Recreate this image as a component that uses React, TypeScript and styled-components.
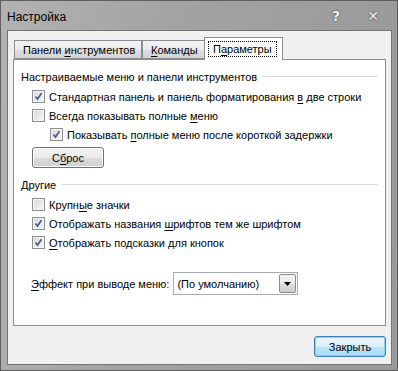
import React from "react";
import styled, { createGlobalStyle } from "styled-components";

const Global = createGlobalStyle`
  html, body { margin: 0; padding: 0; background: #8a8a8a; }
  body { font-family: "Liberation Sans", Arial, sans-serif; font-size: 11px; color: #000; }
`;

const Window = styled.div`
  width: 398px;
  height: 371px;
  box-sizing: border-box;
  border: 1px solid #5e5e5e;
  background: linear-gradient(100deg, #b2b2b2 0%, #a2a2a2 40%, #999999 100%);
  display: flex;
  flex-direction: column;
`;

const TitleBar = styled.div`
  height: 29px;
  display: flex;
  align-items: center;
  padding: 0 0 0 6px;
`;

const Title = styled.div`
  flex: 1;
  font-size: 12px;
  color: #000;
  padding-top: 2px;
`;

const TitleBtn = styled.div<{ $w: number }>`
  width: ${(p) => p.$w}px;
  height: 20px;
  display: flex;
  align-items: center;
  justify-content: center;
  color: #f4f4f4;
  font-weight: bold;
  font-size: 14px;
  text-shadow: 0 0 2px #444, 0 0 1px #444;
  font-family: "DejaVu Sans", sans-serif;
`;

const Client = styled.div`
  flex: 1;
  margin: 0 5px 5px 6px;
  background: #f0f0f0;
  border: 1px solid #747474;
  display: flex;
  flex-direction: column;
  padding: 6px 5px 7px 5px;
`;

const TabRow = styled.div`
  display: flex;
  align-items: flex-end;
  height: 22px;
  padding-left: 1px;
  position: relative;
  z-index: 1;
`;

const Tab = styled.div<{ $active?: boolean; $w: number }>`
  width: ${(p) => p.$w}px;
  height: ${(p) => (p.$active ? 23 : 19)}px;
  box-sizing: border-box;
  border: 1px solid #898c95;
  border-bottom: ${(p) => (p.$active ? "none" : "1px solid #898c95")};
  margin-left: ${(p) => (p.$active ? "-2px" : "0")};
  margin-bottom: ${(p) => (p.$active ? "-1px" : "0")};
  background: ${(p) =>
    p.$active ? "#fff" : "linear-gradient(180deg, #f3f3f3 0%, #ececec 50%, #dfdfdf 51%, #d3d3d3 100%)"};
  display: flex;
  align-items: center;
  padding-left: ${(p) => (p.$active ? 5 : 8)}px;
  padding-top: ${(p) => (p.$active ? 0 : 1)}px;
  white-space: nowrap;
  & + & { border-left: ${(p) => (p.$active ? "1px solid #898c95" : "none")}; }
`;

const Focus = styled.span`
  outline: 1px dotted #000;
  outline-offset: 1px;
  padding: 0 3px;
`;

const Panel = styled.div`
  height: 267px;
  flex: none;
  box-sizing: border-box;
  border: 1px solid #898c95;
  background: #fff;
  padding: 8px 7px 0 7px;
  display: flex;
  flex-direction: column;
`;

const GroupHead = styled.div<{ $top?: number }>`
  display: flex;
  align-items: center;
  gap: 5px;
  height: 17px;
  margin-top: ${(p) => p.$top || 0}px;
  margin-bottom: 2px;
  white-space: nowrap;
  &::after {
    content: "";
    flex: 1;
    border-top: 1px solid #dcdcdc;
  }
`;

const Row = styled.label<{ $indent?: number }>`
  display: flex;
  align-items: center;
  height: 19px;
  padding-left: ${(p) => 11 + (p.$indent || 0)}px;
  gap: 4px;
  white-space: nowrap;
`;

const Box = styled.span`
  width: 13px;
  height: 13px;
  box-sizing: border-box;
  border: 1px solid #8e8f8f;
  background: linear-gradient(135deg, #d8d8d8 0%, #f7f7f7 100%);
  box-shadow: inset 0 0 0 1px #f4f4f4;
  display: inline-flex;
  align-items: center;
  justify-content: center;
  flex: none;
`;

const Check = () => (
  <svg width="9" height="9" viewBox="0 0 9 9">
    <path d="M1.5 4.5 L3.5 7 L7.5 1.2" fill="none" stroke="#4a5a8c" strokeWidth="1.7" />
  </svg>
);

const CheckBox = ({ checked }: { checked?: boolean }) => <Box>{checked ? <Check /> : null}</Box>;

const U = styled.span`
  text-decoration: underline;
  text-underline-offset: 2px;
`;

const Button = styled.div<{ $w: number; $default?: boolean }>`
  width: ${(p) => p.$w}px;
  height: 21px;
  box-sizing: border-box;
  border: 1px solid ${(p) => (p.$default ? "#3c7fb1" : "#707070")};
  border-radius: 3px;
  background: ${(p) =>
    p.$default
      ? "linear-gradient(180deg, #eaf6fd 0%, #d9f0fc 50%, #bee6fd 51%, #a7d9f5 100%)"
      : "linear-gradient(180deg, #f2f2f2 0%, #ebebeb 50%, #dddddd 51%, #cfcfcf 100%)"};
  box-shadow: inset 0 0 0 1px ${(p) => (p.$default ? "#7fd6f8" : "#fcfcfc")};
  display: flex;
  align-items: center;
  justify-content: center;
  flex: none;
`;

const ButtonRow = styled.div`
  padding: 3px 0 0 11px;
`;

const EffectRow = styled.div`
  display: flex;
  align-items: center;
  gap: 4px;
  padding-left: 10px;
  margin-top: 20px;
  white-space: nowrap;
`;

const Combo = styled.div`
  width: 125px;
  height: 23px;
  box-sizing: border-box;
  border: 1px solid #a5acb5;
  background: #fff;
  display: flex;
  align-items: center;
  padding-left: 3px;
`;

const ComboText = styled.span`
  flex: 1;
`;

const ComboArrow = styled.div`
  width: 17px;
  height: 19px;
  margin-right: 1px;
  box-sizing: border-box;
  border: 1px solid #8c8c8c;
  border-radius: 2px;
  background: linear-gradient(180deg, #f2f2f2 0%, #ebebeb 50%, #dddddd 51%, #cfcfcf 100%);
  display: flex;
  align-items: center;
  justify-content: center;
`;

const Footer = styled.div`
  flex: 1;
  display: flex;
  justify-content: flex-end;
  align-items: flex-end;
`;

export default function App() {
  return (
    <>
      <Global />
      <Window>
        <TitleBar>
          <Title>Настройка</Title>
          <TitleBtn $w={26}>?</TitleBtn>
          <TitleBtn $w={48}>✕</TitleBtn>
        </TitleBar>
        <Client>
          <TabRow>
            <Tab $w={128}>
              <span>
                Панели <U>и</U>нструментов
              </span>
            </Tab>
            <Tab $w={64}>
              <span>
                <U>К</U>оманды
              </span>
            </Tab>
            <Tab $w={79} $active>
              <Focus>
                П<U>а</U>раметры
              </Focus>
            </Tab>
          </TabRow>
          <Panel>
            <GroupHead>Настраиваемые меню и панели инструментов</GroupHead>
            <Row>
              <CheckBox checked />
              <span>
                Стандартная панель и панель форматирования <U>в</U> две строки
              </span>
            </Row>
            <Row>
              <CheckBox />
              <span>
                Всегда показывать полные <U>м</U>еню
              </span>
            </Row>
            <Row $indent={18}>
              <CheckBox checked />
              <span>
                Показывать <U>п</U>олные меню после короткой задержки
              </span>
            </Row>
            <ButtonRow>
              <Button $w={72}>
                <span>
                  С<U>б</U>рос
                </span>
              </Button>
            </ButtonRow>
            <GroupHead $top={8}>Другие</GroupHead>
            <Row>
              <CheckBox />
              <span>
                Крупн<U>ы</U>е значки
              </span>
            </Row>
            <Row>
              <CheckBox checked />
              <span>
                Отображать названия <U>ш</U>рифтов тем же шрифтом
              </span>
            </Row>
            <Row>
              <CheckBox checked />
              <span>
                <U>О</U>тображать подсказки для кнопок
              </span>
            </Row>
            <EffectRow>
              <span>
                <U>Э</U>ффект при выводе меню:
              </span>
              <Combo>
                <ComboText>(По умолчанию)</ComboText>
                <ComboArrow>
                  <svg width="7" height="4" viewBox="0 0 7 4">
                    <path d="M0 0 H7 L3.5 4 Z" fill="#000" />
                  </svg>
                </ComboArrow>
              </Combo>
            </EffectRow>
          </Panel>
          <Footer>
            <Button $w={72} $default>
              Закрыть
            </Button>
          </Footer>
        </Client>
      </Window>
    </>
  );
}
